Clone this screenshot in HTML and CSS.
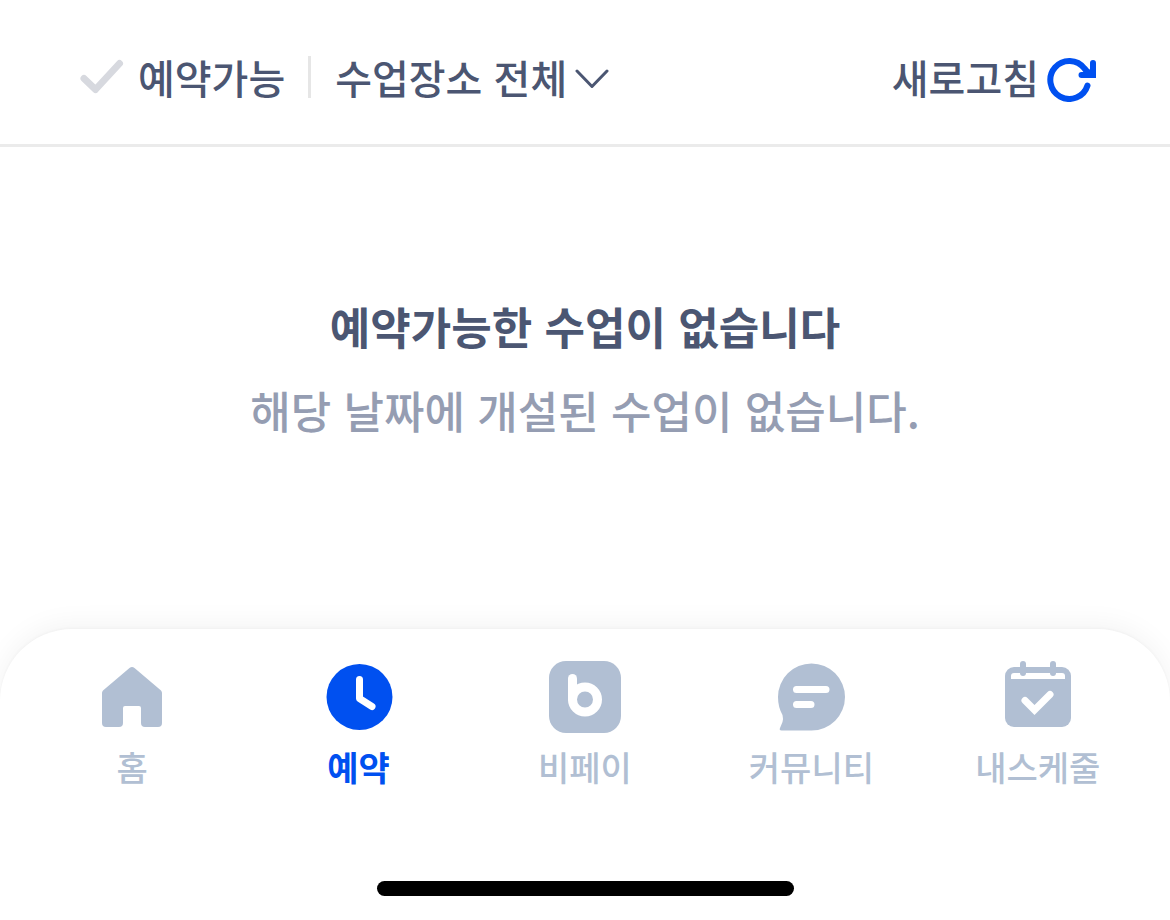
FILE: index.html
```html
<!DOCTYPE html>
<html lang="ko">

<head>
  <meta charset="UTF-8">
  <meta name="viewport" content="width=device-width, initial-scale=1.0">
  <title>예약</title>
  <link rel="stylesheet" href="styles.css">
</head>

<body>
  <header class="filter-bar">
    <label class="available">
      <input type="checkbox" class="available-input">
      <svg class="check" width="44" height="36" viewBox="0 0 44 36">
        <path d="M4 19.5L15.500 30.500L39.500 4.500" />
      </svg>
      <span>예약가능</span>
    </label>
    <span class="divider"></span>
    <div class="place">
      <select class="place-select" aria-label="수업장소">
        <option>수업장소 전체</option>
      </select>
      <svg class="chevron" width="34" height="24" viewBox="0 -4 34 24">
        <path d="M2 2L17 17.500L32 2" />
      </svg>
    </div>
    <button type="button" class="refresh">
      <span>새로고침</span>
      <svg class="refresh-icon" width="50" height="50" viewBox="0 -6 50 50">
        <path class="arc" d="M40.500 27.500A19 19 0 1 1 37.500 10.500L42 16" />
        <path class="arrow" d="M46 5V17H34.500" />
        <path class="arrow-fill" d="M37 9L46 13V17H38Z" />
      </svg>
    </button>
  </header>

  <main class="empty">
    <h1>예약가능한 수업이 없습니다</h1>
    <p>해당 날짜에 개설된 수업이 없습니다.</p>
  </main>

  <footer class="bottom">
    <nav class="tabs">
      <a href="#home" class="tab">
        <svg width="72" height="72" viewBox="0 0 72 72">
          <path class="fill" d="M33.500 7Q36 5 38.500 7L65 29.500Q66 30.500 66 32V62Q66 66 62 66H49Q45 66 45 62V47Q45 45 43 45H29Q27 45 27 47V62Q27 66 23 66H10Q6 66 6 62V32Q6 30.500 7 29.500Z" />
        </svg>
        <span>홈</span>
      </a>
      <a href="#reserve" class="tab active">
        <svg width="72" height="72" viewBox="0 0 72 72">
          <circle class="fill" cx="36.500" cy="36" r="33" />
          <path class="line" d="M36.500 18.500V37.500L49 45.500" />
        </svg>
        <span>예약</span>
      </a>
      <a href="#bpay" class="tab">
        <svg width="72" height="72" viewBox="0 0 72 72">
          <rect class="fill" width="72" height="72" rx="17" />
          <path class="line bold" d="M23.500 17.500V38" />
          <circle class="line bold" cx="36" cy="38.500" r="12.500" />
        </svg>
        <span>비페이</span>
      </a>
      <a href="#community" class="tab">
        <svg width="72" height="72" viewBox="0 0 72 72">
          <path class="fill" d="M36.500 2.500A33.500 33.500 0 0 1 36.500 69.500H6.500Q4 69.500 5 67L7.500 61Q8.500 58 7.500 54Q3 46 3 36A33.500 33.500 0 0 1 36.500 2.500Z" />
          <path class="line" d="M21.500 28.500H51M21.500 43.500H36" />
        </svg>
        <span>커뮤니티</span>
      </a>
      <a href="#schedule" class="tab">
        <svg width="72" height="72" viewBox="0 0 72 72">
          <rect class="fill" x="3" y="6" width="66" height="60" rx="9" />
          <path class="cut" d="M9 18V15Q9 12 12 12H60Q63 12 63 15V18Z" />
          <rect class="fill" x="18" y="0" width="6" height="15" rx="3" />
          <rect class="fill" x="48" y="0" width="6" height="15" rx="3" />
          <path class="line miter" d="M23 39.500L32.500 49L48 33.500" />
        </svg>
        <span>내스케줄</span>
      </a>
    </nav>
    <div class="home-indicator"></div>
  </footer>
</body>

</html>
```

FILE: styles.css
```css
* {
  box-sizing: border-box;
}

body {
  display: flex;
  flex-direction: column;
  min-height: 100vh;
  margin: 0;
  background: #fff;
  color: #4b5672;
  font-family: "Noto Sans CJK KR", sans-serif;
  font-weight: 500;
}

svg {
  display: block;
  flex: none;
  fill: none;
  stroke-linecap: round;
  stroke-linejoin: round;
}

.filter-bar {
  display: flex;
  align-items: center;
  padding: 47px 73px 37px 80px;
  border-bottom: 3px solid #ebebeb;
  font-size: 40px;
  line-height: 60px;
}

.available {
  display: flex;
  align-items: center;
  position: relative;
  cursor: pointer;
}

.available-input {
  position: absolute;
  inset: 0;
  margin: 0;
  opacity: 0;
}

.check {
  margin-right: 14px;
  stroke: #d7d9df;
  stroke-width: 7;
}

.available-input:checked + .check {
  stroke: #0050f0;
}

.divider {
  width: 3px;
  height: 42px;
  margin: 0 24px 0 23px;
  background: #e6e6e6;
}

.place {
  display: flex;
  align-items: center;
}

.place-select {
  appearance: none;
  margin: 0;
  padding: 0;
  border: 0;
  background: none;
  color: inherit;
  font: inherit;
}

.chevron {
  margin-left: 10px;
  stroke: #4b5672;
  stroke-width: 3;
}

.refresh {
  display: flex;
  align-items: center;
  gap: 8px;
  margin-left: auto;
  padding: 0;
  border: 0;
  background: none;
  color: inherit;
  font: inherit;
  cursor: pointer;
}

.refresh-icon {
  stroke: #0050f0;
}

.arc {
  stroke-width: 6;
}

.arrow {
  stroke-width: 6;
  stroke-linejoin: miter;
}

.arrow-fill {
  fill: #0050f0;
  stroke: none;
}

.empty {
  flex: 1;
  padding: 137px 24px;
  text-align: center;
  font-size: 44px;
  line-height: 84px;
}

.empty h1 {
  margin: 0;
  font-size: 44px;
  font-weight: 700;
}

.empty p {
  margin: 0;
  color: #959db2;
}

.bottom {
  padding: 32px 19px 24px;
  border-radius: 72px 72px 0 0;
  background: #fff;
  box-shadow: 0 -4px 28px rgba(0, 0, 0, 0.05), 0 -1px 3px rgba(0, 0, 0, 0.03);
}

.tabs {
  display: grid;
  grid-template-columns: repeat(5, 1fr);
}

.tab {
  display: flex;
  flex-direction: column;
  align-items: center;
  gap: 14px;
  color: #b1bfd3;
  font-size: 34px;
  line-height: 40px;
  text-decoration: none;
}

.tab.active {
  color: #0050f0;
  font-weight: 700;
}

.fill {
  fill: currentColor;
}

.cut {
  fill: #fff;
}

.line {
  stroke: #fff;
  stroke-width: 7;
}

.line.bold {
  stroke-width: 9;
}

.line.miter {
  stroke-linejoin: miter;
}

.home-indicator {
  width: 417px;
  max-width: 60%;
  height: 15px;
  margin: 94px auto 0;
  border-radius: 8px;
  background: #000;
}
```
